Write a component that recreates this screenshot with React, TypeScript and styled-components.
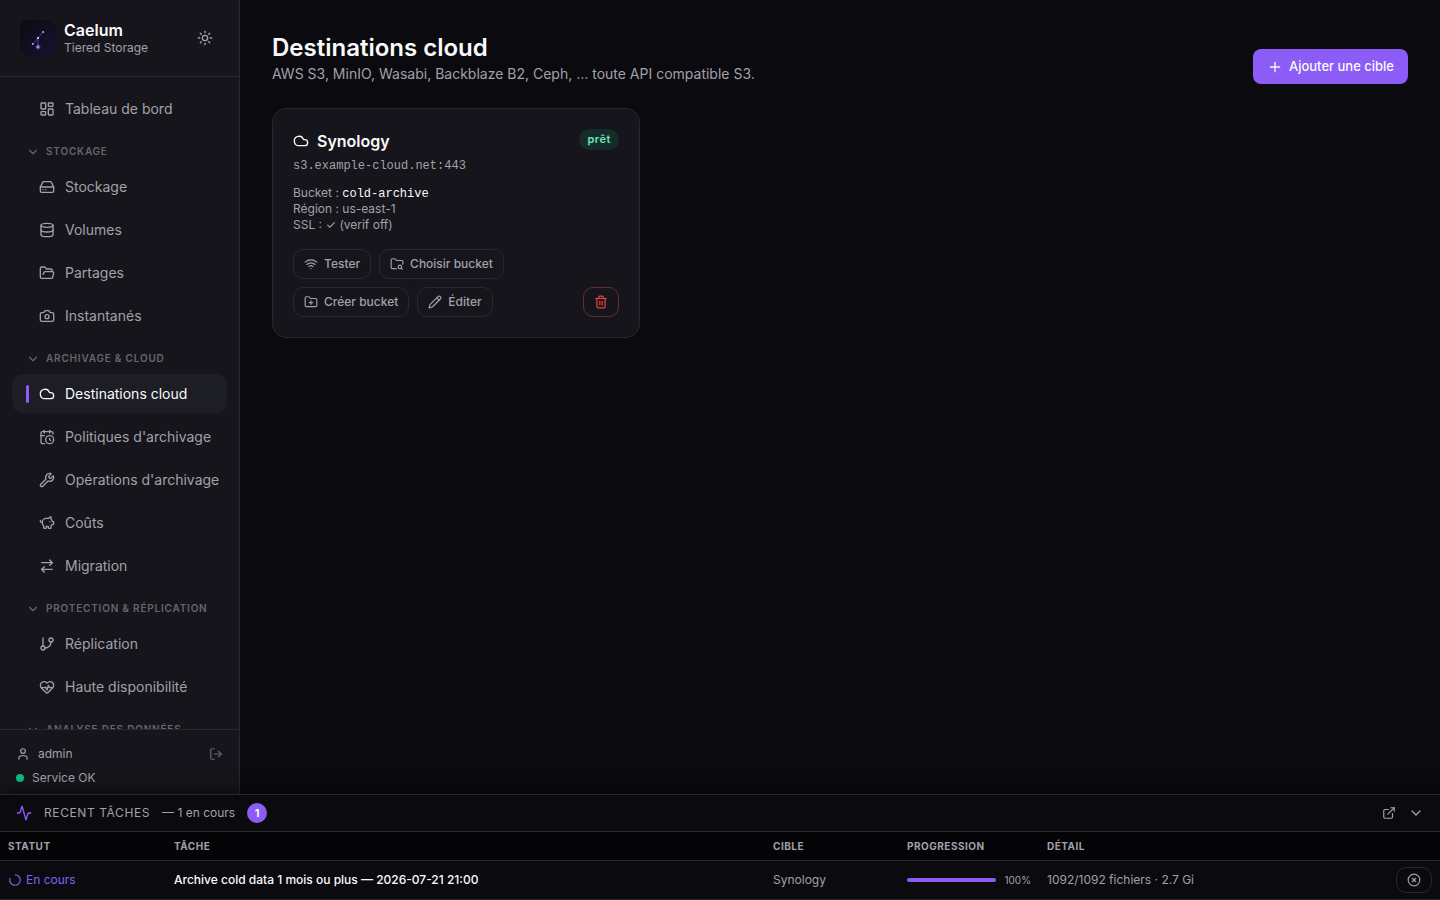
import React from "react";
import styled, { createGlobalStyle, css } from "styled-components";
import {
  Activity, ArrowRightLeft, Camera, CalendarClock, ChevronDown, CircleX, Cloud, Database,
  ExternalLink, FolderOpen, FolderPlus, FolderSearch, GitBranch, HardDrive, HeartPulse,
  LayoutDashboard, LoaderCircle, LogOut, Pencil, PiggyBank, Plus, Sun, Trash2, User, Wifi, Wrench,
  type LucideIcon,
} from "lucide-react";

const c = {
  bg: "#0a0a0f",
  surface: "#15151b",
  raised: "#1c1d25",
  head: "#040406",
  line: "#27272f",
  text: "#fafafa",
  muted: "#a1a1aa",
  faint: "#66666f",
  accent: "#8b5cf6",
  ok: "#10b981",
  danger: "#ef4444",
};

const Global = createGlobalStyle`
  *, *::before, *::after { box-sizing: border-box; }
  body { margin: 0; background: ${c.bg}; color: ${c.text}; font: 400 14px/20px Inter, "Liberation Sans", sans-serif; }
  button { font: inherit; color: inherit; background: none; border: 0; padding: 0; cursor: pointer; }
  h1, h2, p, ul { margin: 0; padding: 0; }
  ul { list-style: none; }
  svg { display: block; flex-shrink: 0; }
`;

const Shell = styled.div`
  height: 100vh;
  display: flex;
  flex-direction: column;
`;
const Body = styled.div`
  flex: 1;
  min-height: 0;
  display: flex;
`;

const Sidebar = styled.aside`
  width: 240px;
  flex-shrink: 0;
  display: flex;
  flex-direction: column;
  background: ${c.surface};
  border-right: 1px solid ${c.line};
`;
const Brand = styled.header`
  display: flex;
  align-items: center;
  gap: 8px;
  padding: 20px;
  border-bottom: 1px solid ${c.line};
`;
const BrandText = styled.div`
  flex: 1;
`;
const BrandName = styled.div`
  font-size: 16px;
  line-height: 20px;
  font-weight: 600;
`;
const BrandSub = styled.div`
  font-size: 12px;
  line-height: 16px;
  color: ${c.muted};
`;
const IconButton = styled.button<{ $faint?: boolean; $pad?: number }>`
  color: ${(p) => (p.$faint ? c.faint : c.muted)};
  padding: ${(p) => p.$pad ?? 0}px;
`;

const Nav = styled.nav`
  flex: 1;
  min-height: 0;
  overflow-x: hidden;
  overflow-y: auto;
  scrollbar-width: none;
  padding: 12px;
  display: flex;
  flex-direction: column;
  gap: 4px;
`;
const NavList = styled.ul`
  display: flex;
  flex-direction: column;
  gap: 4px;
`;
const NavLink = styled.a<{ $active?: boolean }>`
  display: flex;
  align-items: center;
  gap: 10px;
  height: 39px;
  padding: 0 14px;
  border-radius: 10px;
  font-size: 14px;
  line-height: 21px;
  white-space: nowrap;
  text-decoration: none;
  color: ${c.muted};
  &::before {
    content: "";
    flex-shrink: 0;
    width: 3px;
    height: 18px;
    border-radius: 2px;
  }
  ${(p) => p.$active && css`
    color: ${c.text};
    background: ${c.raised};
    &::before { background: ${c.accent}; }
  `}
`;
const SectionToggle = styled.button`
  display: flex;
  align-items: center;
  gap: 6px;
  flex-shrink: 0;
  padding: 12px 14px 4px;
  font-size: 10px;
  line-height: 15px;
  font-weight: 600;
  letter-spacing: 0.08em;
  white-space: nowrap;
  text-transform: uppercase;
  color: ${c.faint};
`;

const Account = styled.footer`
  display: flex;
  flex-direction: column;
  gap: 8px;
  padding: 16px 16px 8px;
  border-top: 1px solid ${c.line};
  font-size: 12px;
  line-height: 16px;
  color: ${c.muted};
`;
const AccountRow = styled.div`
  display: flex;
  align-items: center;
  gap: 8px;
`;
const Grow = styled.span`
  flex: 1;
`;
const Dot = styled.span`
  width: 8px;
  height: 8px;
  border-radius: 50%;
  background: ${c.ok};
`;

const Main = styled.main`
  flex: 1;
  min-width: 0;
  overflow: auto;
  padding: 32px;
`;
const PageHead = styled.div`
  display: flex;
  align-items: flex-end;
  justify-content: space-between;
  margin-bottom: 24px;
`;
const Title = styled.h1`
  font-size: 24px;
  line-height: 32px;
  font-weight: 600;
`;
const Lead = styled.p`
  font-size: 14px;
  line-height: 20px;
  color: ${c.muted};
`;
const Primary = styled.button`
  display: flex;
  align-items: center;
  gap: 6px;
  height: 35px;
  padding: 0 14px;
  border-radius: 8px;
  background: ${c.accent};
  font-size: 13px;
  line-height: 21px;
  font-weight: 500;
`;
const Cards = styled.div`
  display: grid;
  grid-template-columns: repeat(3, minmax(0, 1fr));
  gap: 16px;
`;
const Card = styled.article`
  padding: 20px;
  border: 1px solid ${c.line};
  border-radius: 14px;
  background: ${c.surface};
  font-size: 12px;
  line-height: 16px;
  color: ${c.muted};
`;
const CardHead = styled.div`
  display: flex;
  justify-content: space-between;
  align-items: flex-start;
`;
const CardTitle = styled.h2`
  display: flex;
  align-items: center;
  gap: 8px;
  font-size: 16px;
  line-height: 24px;
  font-weight: 600;
  color: ${c.text};
`;
const Ready = styled.span`
  padding: 0 8px;
  border-radius: 11px;
  background: #162c2b;
  color: #6ee7b7;
  font-size: 11px;
  line-height: 21px;
  font-weight: 600;
  letter-spacing: 0.05em;
`;
const Host = styled.p`
  margin: 4px 0 10px;
  font-family: "Liberation Mono", monospace;
  line-height: 18px;
`;
const Code = styled.code`
  font-family: "Liberation Mono", monospace;
  font-size: 12px;
  line-height: 12px;
  color: ${c.text};
`;
const Actions = styled.div`
  display: flex;
  flex-wrap: wrap;
  gap: 8px;
  margin-top: 16px;
`;
const Outline = styled.button<{ $danger?: boolean }>`
  display: flex;
  align-items: center;
  gap: 6px;
  height: 30px;
  padding: 0 10px;
  border: 1px solid ${c.line};
  border-radius: 10px;
  font-weight: 500;
  ${(p) => p.$danger && css`
    margin-left: auto;
    color: ${c.danger};
    border-color: #6a2a31;
  `}
`;

const Tasks = styled.section`
  flex-shrink: 0;
  border-top: 1px solid ${c.line};
  box-shadow: 0 -4px 16px rgba(0, 0, 0, 0.4);
  background: ${c.bg};
  position: relative;
  font-size: 12px;
  line-height: 16px;
  color: ${c.muted};
`;
const TasksHead = styled.div`
  display: flex;
  align-items: center;
  gap: 12px;
  height: 36px;
  padding: 0 16px;
`;
const TasksTitle = styled.h2`
  font-size: 12px;
  font-weight: 400;
  letter-spacing: 0.05em;
  text-transform: uppercase;
`;
const Count = styled.span`
  min-width: 20px;
  border-radius: 10px;
  background: ${c.accent};
  color: ${c.text};
  font-size: 11px;
  line-height: 20px;
  font-weight: 700;
  text-align: center;
`;
const Table = styled.table`
  width: 100%;
  table-layout: fixed;
  border-collapse: separate;
  border-spacing: 0;
  th, td {
    padding: 0 8px;
    text-align: left;
    white-space: nowrap;
    border-bottom: 1px solid ${c.line};
  }
  th {
    height: 30px;
    border-top: 1px solid ${c.line};
    background: ${c.head};
    font-size: 10px;
    font-weight: 700;
    letter-spacing: 0.05em;
    text-transform: uppercase;
  }
  td { height: 39px; }
`;
const Col = styled.col<{ $w?: number }>`
  width: ${(p) => (p.$w ? `${p.$w}px` : "auto")};
`;
const State = styled.span`
  display: flex;
  align-items: center;
  gap: 4px;
  color: ${c.accent};
  svg { transform: rotate(-90deg); }
`;
const TaskName = styled.span`
  font-weight: 500;
  color: ${c.text};
`;
const Progress = styled.div`
  display: flex;
  align-items: center;
  gap: 8px;
  font-size: 10px;
`;
const Track = styled.div`
  flex: 1;
  height: 4px;
  border-radius: 2px;
  background: ${c.line};
`;
const Fill = styled.div`
  height: 100%;
  border-radius: 2px;
  background: ${c.accent};
`;
const Cancel = styled.button`
  display: block;
  padding: 5px 10px;
  border: 1px solid ${c.line};
  border-radius: 10px;
`;

const Logo = () => (
  <svg width="36" height="36" viewBox="0 0 36 36" aria-hidden="true">
    <defs>
      <linearGradient id="night" x1="0" y1="0" x2="1" y2="1">
        <stop offset="0" stopColor="#0b0b12" />
        <stop offset="1" stopColor="#18112f" />
      </linearGradient>
      <radialGradient id="glow">
        <stop offset="0" stopColor="#8b5cf6" stopOpacity="0.9" />
        <stop offset="1" stopColor="#8b5cf6" stopOpacity="0" />
      </radialGradient>
    </defs>
    <rect width="36" height="36" rx="8" fill="url(#night)" />
    <path d="M13 24 18 18 23 12M18 18V27" fill="none" stroke="#8b5cf6" strokeOpacity="0.6" strokeWidth="0.9" />
    <circle cx="18" cy="27" r="3.2" fill="url(#glow)" />
    <circle cx="18" cy="27" r="1.4" fill="#a78bfa" />
    <circle cx="12.8" cy="24" r="1" fill="#b9a5fb" />
    <circle cx="18" cy="18" r="1.1" fill="#ddd6fe" />
    <circle cx="23.2" cy="12" r="1" fill="#b9a5fb" />
  </svg>
);

type Item = [LucideIcon, string];
const home: Item[] = [[LayoutDashboard, "Tableau de bord"]];
const sections: { title: string; items: Item[] }[] = [
  { title: "Stockage", items: [[HardDrive, "Stockage"], [Database, "Volumes"], [FolderOpen, "Partages"], [Camera, "Instantanés"]] },
  { title: "Archivage & Cloud", items: [[Cloud, "Destinations cloud"], [CalendarClock, "Politiques d'archivage"], [Wrench, "Opérations d'archivage"], [PiggyBank, "Coûts"], [ArrowRightLeft, "Migration"]] },
  { title: "Protection & Réplication", items: [[GitBranch, "Réplication"], [HeartPulse, "Haute disponibilité"]] },
  { title: "Analyse des données", items: [] },
];

const Items = ({ items }: { items: Item[] }) => (
  <NavList>
    {items.map(([Icon, label]) => (
      <li key={label}>
        <NavLink href="#" $active={label === "Destinations cloud"}>
          <Icon size={16} />
          {label}
        </NavLink>
      </li>
    ))}
  </NavList>
);

export default function App() {
  const percent = 100;
  return (
    <Shell>
      <Global />
      <Body>
        <Sidebar>
          <Brand>
            <Logo />
            <BrandText>
              <BrandName>Caelum</BrandName>
              <BrandSub>Tiered Storage</BrandSub>
            </BrandText>
            <IconButton $pad={6} aria-label="Thème"><Sun size={16} /></IconButton>
          </Brand>
          <Nav>
            <Items items={home} />
            {sections.map((s) => (
              <React.Fragment key={s.title}>
                <SectionToggle><ChevronDown size={14} />{s.title}</SectionToggle>
                {s.items.length > 0 && <Items items={s.items} />}
              </React.Fragment>
            ))}
          </Nav>
          <Account>
            <AccountRow>
              <User size={14} />
              <Grow>admin</Grow>
              <IconButton $faint aria-label="Déconnexion"><LogOut size={14} /></IconButton>
            </AccountRow>
            <AccountRow><Dot />Service OK</AccountRow>
          </Account>
        </Sidebar>
        <Main>
          <PageHead>
            <div>
              <Title>Destinations cloud</Title>
              <Lead>AWS S3, MinIO, Wasabi, Backblaze B2, Ceph, … toute API compatible S3.</Lead>
            </div>
            <Primary><Plus size={16} />Ajouter une cible</Primary>
          </PageHead>
          <Cards>
            <Card>
              <CardHead>
                <CardTitle><Cloud size={16} />Synology</CardTitle>
                <Ready>prêt</Ready>
              </CardHead>
              <Host>s3.example-cloud.net:443</Host>
              <p>Bucket : <Code>cold-archive</Code></p>
              <p>Région : us-east-1</p>
              <p>SSL : ✓ (verif off)</p>
              <Actions>
                <Outline><Wifi size={14} />Tester</Outline>
                <Outline><FolderSearch size={14} />Choisir bucket</Outline>
                <Outline><FolderPlus size={14} />Créer bucket</Outline>
                <Outline><Pencil size={14} />Éditer</Outline>
                <Outline $danger aria-label="Supprimer"><Trash2 size={14} /></Outline>
              </Actions>
            </Card>
          </Cards>
        </Main>
      </Body>
      <Tasks>
        <TasksHead>
          <Activity size={16} color={c.accent} />
          <TasksTitle>Recent tâches</TasksTitle>
          <span>— 1 en cours</span>
          <Count>1</Count>
          <Grow />
          <IconButton aria-label="Ouvrir"><ExternalLink size={14} /></IconButton>
          <IconButton aria-label="Réduire"><ChevronDown size={16} /></IconButton>
        </TasksHead>
        <Table>
          <colgroup>
            <Col $w={166} /><Col /><Col $w={134} /><Col $w={140} /><Col $w={349} /><Col $w={52} />
          </colgroup>
          <thead>
            <tr><th>Statut</th><th>Tâche</th><th>Cible</th><th>Progression</th><th>Détail</th><th aria-label="Actions" /></tr>
          </thead>
          <tbody>
            <tr>
              <td><State><LoaderCircle size={14} />En cours</State></td>
              <td><TaskName>Archive cold data 1 mois ou plus — 2026-07-21 21:00</TaskName></td>
              <td>Synology</td>
              <td>
                <Progress>
                  <Track><Fill style={{ width: `${percent}%` }} /></Track>
                  {percent}%
                </Progress>
              </td>
              <td>1092/1092 fichiers · 2.7 Gi</td>
              <td><Cancel aria-label="Annuler"><CircleX size={14} /></Cancel></td>
            </tr>
          </tbody>
        </Table>
      </Tasks>
    </Shell>
  );
}
